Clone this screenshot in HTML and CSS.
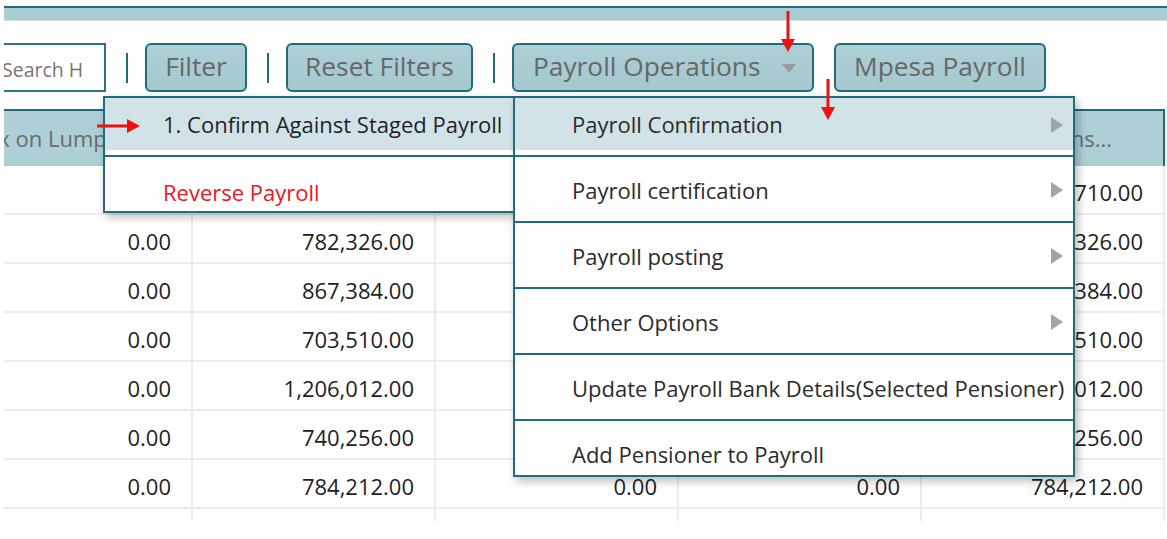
FILE: index.html
```html
<!DOCTYPE html>
<html>
<head>
<meta charset="utf-8">
<title>Payroll</title>
<link rel="stylesheet" href="styles.css">
</head>
<body>
<div class="page">
  <div class="topbar"></div>

  <div class="toolbar">
    <div class="search">Search H</div>
    <span class="sep"></span>
    <button class="btn btn-filter">Filter</button>
    <span class="sep"></span>
    <button class="btn btn-reset">Reset Filters</button>
    <span class="sep"></span>
    <div class="ops">
      <button class="btn btn-ops">Payroll Operations<span class="caret"></span></button>
      <div class="menu menu-main">
        <div class="mi active">Payroll Confirmation<span class="tri"></span></div>
        <div class="mi">Payroll certification<span class="tri"></span></div>
        <div class="mi">Payroll posting<span class="tri"></span></div>
        <div class="mi">Other Options<span class="tri"></span></div>
        <div class="mi">Update Payroll Bank Details(Selected Pensioner)</div>
        <div class="mi last">Add Pensioner to Payroll</div>
      </div>
      <div class="menu menu-sub">
        <div class="mi active dark">1. Confirm Against Staged Payroll</div>
        <div class="mi last danger">Reverse Payroll</div>
      </div>
    </div>
    <button class="btn btn-mpesa">Mpesa Payroll</button>
  </div>

  <div class="grid">
    <div class="row head">
      <div class="hc first">Tax on Lumpsum</div>
      <div class="hc">Gross Amount</div>
      <div class="hc">Deductions</div>
      <div class="hc">Arrears</div>
      <div class="hc num">Net Pensions...</div>
    </div>
    <div class="body">
      <div class="row"><div class="c">0.00</div><div class="c">794,710.00</div><div class="c">0.00</div><div class="c">0.00</div><div class="c">794,710.00</div></div>
      <div class="row"><div class="c">0.00</div><div class="c">782,326.00</div><div class="c">0.00</div><div class="c">0.00</div><div class="c">782,326.00</div></div>
      <div class="row"><div class="c">0.00</div><div class="c">867,384.00</div><div class="c">0.00</div><div class="c">0.00</div><div class="c">867,384.00</div></div>
      <div class="row"><div class="c">0.00</div><div class="c">703,510.00</div><div class="c">0.00</div><div class="c">0.00</div><div class="c">703,510.00</div></div>
      <div class="row"><div class="c">0.00</div><div class="c">1,206,012.00</div><div class="c">0.00</div><div class="c">0.00</div><div class="c">1,206,012.00</div></div>
      <div class="row"><div class="c">0.00</div><div class="c">740,256.00</div><div class="c">0.00</div><div class="c">0.00</div><div class="c">740,256.00</div></div>
      <div class="row"><div class="c">0.00</div><div class="c">784,212.00</div><div class="c">0.00</div><div class="c">0.00</div><div class="c">784,212.00</div></div>
      <div class="row"><div class="c"></div><div class="c"></div><div class="c"></div><div class="c"></div><div class="c"></div></div>
    </div>
  </div>

  <svg class="arrow arrow-a" width="16" height="42" viewBox="0 0 16 42"><rect x="6.5" y="0" width="3" height="29" fill="#ee1111"/><polygon points="1,28 15,28 8,41" fill="#ee1111"/></svg>
  <svg class="arrow arrow-b" width="16" height="42" viewBox="0 0 16 42"><rect x="6.5" y="0" width="3" height="29" fill="#ee1111"/><polygon points="1,28 15,28 8,41" fill="#ee1111"/></svg>
  <svg class="arrow arrow-c" width="44" height="16" viewBox="0 0 44 16"><rect x="0" y="6.5" width="31" height="3" fill="#ee1111"/><polygon points="30,1 30,15 43,8" fill="#ee1111"/></svg>
</div>
</body>
</html>
```

FILE: styles.css
```css
html, body {
  margin: 0;
  padding: 0;
  background: #ffffff;
}
body {
  width: 1167px;
  height: 539px;
  overflow: hidden;
  font-family: "Open Sans", "DejaVu Sans", sans-serif;
  font-weight: 500;
}
.page {
  position: relative;
  height: 539px;
  padding-left: 4px;
  overflow: hidden;
}

/* top strip */
.topbar {
  margin-top: 6px;
  height: 12px;
  border-top: 2px solid #1f6d7c;
  border-bottom: 1px solid #c9e0e4;
  background: #a9cdd3;
}

/* toolbar */
.toolbar {
  display: flex;
  align-items: center;
  margin-top: 22px;
  height: 49px;
}
.search {
  width: 102px;
  height: 49px;
  box-sizing: border-box;
  border: 2px solid #2a7484;
  border-left: none;
  padding-top: 2px;
  font-size: 19.5px;
  line-height: 45px;
  color: #7a7470;
  white-space: nowrap;
  overflow: hidden;
  text-indent: -2px;
}
.sep {
  width: 2px;
  height: 30px;
  background: #1f6d7c;
  margin: 0 17px 0 20px;
}
.btn {
  height: 49px;
  box-sizing: border-box;
  border: 2px solid #1f6d7c;
  border-radius: 6px;
  background: linear-gradient(#adcfd5, #a5c8ce);
  color: #676767;
  font-family: "Open Sans", "DejaVu Sans", sans-serif;
  font-weight: 500;
  font-size: 26.3px;
  padding: 0 0 4px 0;
  text-align: center;
}
.btn-filter { width: 102px; }
.btn-reset { width: 187px; }
.btn-mpesa { width: 212px; margin-left: 20px; }
.ops {
  position: relative;
}
.btn-ops {
  width: 302px;
  text-align: left;
  padding-left: 19px;
}
.caret {
  display: inline-block;
  width: 0;
  height: 0;
  border-top: 9px solid #9a9a9a;
  border-left: 7px solid transparent;
  border-right: 7px solid transparent;
  margin-left: 22px;
  vertical-align: middle;
}

/* dropdown menus */
.menu {
  position: absolute;
  top: 53px;
  box-sizing: border-box;
  background: #ffffff;
  border: 2px solid #1f6d7c;
  box-shadow: 3px 4px 9px rgba(0, 0, 0, 0.28);
  font-size: 22px;
  color: #2b2b2b;
}
.menu-main {
  left: 1px;
  width: 562px;
  z-index: 3;
}
.menu-sub {
  left: -409px;
  width: 412px;
  z-index: 2;
}
.mi {
  position: relative;
  height: 66px;
  box-sizing: border-box;
  border-bottom: 2px solid #1f6d7c;
  padding: 18px 0 0 57px;
  line-height: 30px;
  white-space: nowrap;
}
.mi.active {
  height: 59px;
  padding-top: 11px;
  background: linear-gradient(#d2e3e8 0, #d2e3e8 52px, transparent 52px);
}
.mi.last {
  height: 54px;
  border-bottom: none;
}
.menu-sub .mi { padding-left: 58px; }
.menu-sub .mi.last { padding-top: 20px; }
.mi.dark { color: #1f1f2a; }
.mi.danger { color: #f0141e; }
.tri {
  position: absolute;
  right: 10px;
  margin-top: -8px;
  width: 0;
  height: 0;
  border-left: 12px solid #a3a3a3;
  border-top: 8px solid transparent;
  border-bottom: 8px solid transparent;
}
.mi.active .tri { top: 27px; }
.mi:not(.active) .tri { top: 33px; }

/* grid */
.grid {
  margin-top: 17px;
  width: 1161px;
}
.row {
  display: grid;
  grid-template-columns: 189px 243px 243px 243px 243px;
  height: 49px;
  box-sizing: border-box;
  border-bottom: 2px solid #ececec;
}
.row.head {
  height: 57px;
  border-top: 2px solid #1f6d7c;
  border-right: 2px solid #1f6d7c;
  border-bottom: none;
  background: #aecfd6;
  grid-template-columns: 189px 243px 243px 243px 241px;
  overflow: hidden;
}
.hc {
  font-size: 22px;
  line-height: 55px;
  color: #6b6b6b;
  white-space: nowrap;
  overflow: hidden;
  padding-left: 10px;
}
.hc.first {
  padding-left: 0;
  text-indent: -30px;
}
.hc.num {
  text-align: right;
  padding-right: 51px;
}
.body {
  height: 355px;
  overflow: hidden;
}
.c {
  border-right: 2px solid #ececec;
  text-align: right;
  padding: 3px 20px 0 0;
  font-size: 22px;
  line-height: 47px;
  color: #1e1e1e;
  white-space: nowrap;
  overflow: hidden;
}

/* annotation arrows */
.arrow {
  position: absolute;
  z-index: 5;
}
.arrow-a { left: 780px; top: 11px; }
.arrow-b { left: 820px; top: 79px; }
.arrow-c { left: 97px; top: 118px; }
```
